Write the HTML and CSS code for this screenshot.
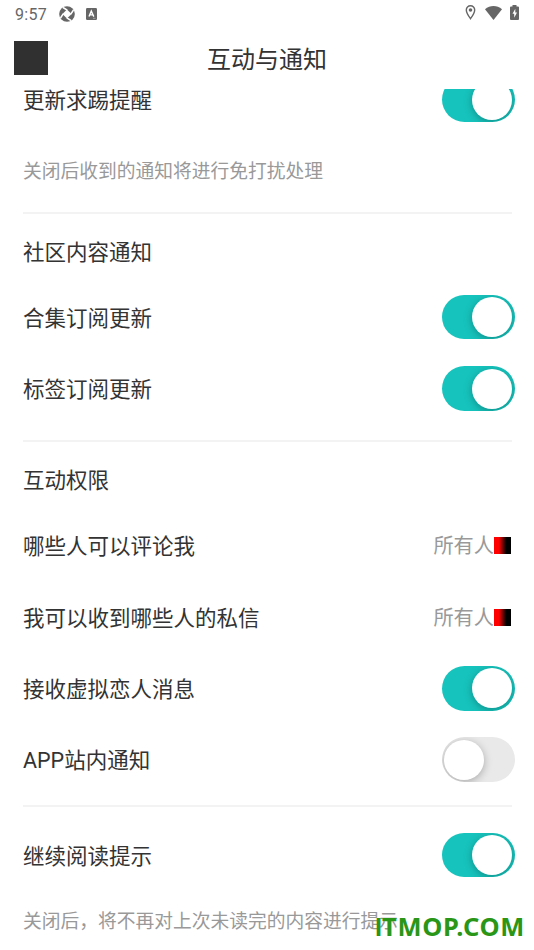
FILE: index.html
```html
<!DOCTYPE html>
<html lang="zh-CN">
<head>
<meta charset="utf-8">
<title>互动与通知</title>
<link rel="stylesheet" href="styles.css">
</head>
<body>
<div class="status">
  <span class="time">9:57</span>
  <svg class="aperture" width="16" height="16" viewBox="0 0 16 16"><circle cx="8" cy="8" r="7.8" fill="#666"/><path d="M8 3.400 12.600 8 8 12.600 3.400 8z" fill="#fff"/><path d="M8.200 4.200 4 1.500M11.800 8.200 14.500 4M7.800 11.800 12 14.500M4.200 7.800 1.500 12" stroke="#fff" stroke-width="1.500"/></svg>
  <svg class="keyboard" width="11" height="12" viewBox="0 0 11 12"><rect width="11" height="12" rx="1.2" fill="#666"/><path d="M3 8.6 5.3 3.1 7.8 8.6M3.9 6.9h3" fill="none" stroke="#fff" stroke-width="1.4"/><path d="M7 10.3h2.5" stroke="#bbb" stroke-width=".7"/></svg>
  <span class="spacer"></span>
  <svg class="pin" width="11" height="15" viewBox="0 0 10 15"><path d="M5 .8C2.600.8.8 2.600.8 5c0 3 4.200 8.700 4.200 8.700S9.200 8 9.200 5C9.200 2.600 7.400.8 5 .8z" fill="none" stroke="#666" stroke-width="1.400"/><circle cx="5" cy="5" r="1.800" fill="#666"/></svg>
  <svg class="wifi" width="17" height="14" viewBox="0 0 17 14"><path d="M0 3.300C5-1 12-1 17 3.300L8.500 14z" fill="#666"/></svg>
  <svg class="battery" width="9" height="15" viewBox="0 0 9 15"><path d="M2.500 0h4v1.500H8q1 0 1 1V14q0 1-1 1H1q-1 0-1-1V2.500q0-1 1-1h1.500z" fill="#666"/><path d="M5.300 3.700 2.500 8.700h1.700v4L7 7.500H5.300z" fill="#fff"/></svg>
</div>
<header class="header">
  <span class="back"></span>
  <h1 class="title">互动与通知</h1>
</header>
<main class="viewport">
  <div class="list">
    <div class="row"><span class="label">更新求踢提醒</span><span class="toggle on"></span></div>
    <p class="hint first">关闭后收到的通知将进行免打扰处理</p>
    <section class="group">
      <h2 class="heading">社区内容通知</h2>
      <div class="row"><span class="label">合集订阅更新</span><span class="toggle on"></span></div>
      <div class="row"><span class="label">标签订阅更新</span><span class="toggle on"></span></div>
    </section>
    <section class="group permissions">
      <h2 class="heading">互动权限</h2>
      <div class="row"><span class="label">哪些人可以评论我</span><span class="value"><span class="label">所有人</span><i class="arrow"></i></span></div>
      <div class="row"><span class="label">我可以收到哪些人的私信</span><span class="value"><span class="label">所有人</span><i class="arrow"></i></span></div>
      <div class="row"><span class="label">接收虚拟恋人消息</span><span class="toggle on"></span></div>
      <div class="row"><span class="label">APP站内通知</span><span class="toggle"></span></div>
    </section>
    <section class="group reading">
      <div class="row"><span class="label">继续阅读提示</span><span class="toggle on"></span></div>
      <p class="hint">关闭后，将不再对上次未读完的内容进行提示</p>
    </section>
  </div>
</main>
<div class="watermark"><span class="initial">I</span>TMOP.COM</div>
</body>
</html>
```

FILE: styles.css
```css
* { box-sizing: border-box; }
body {
  margin: 0;
  width: 534px;
  height: 950px;
  overflow: hidden;
  position: relative;
  background: #fff;
  color: #333;
  font-family: Roboto, "Noto Sans CJK SC", sans-serif;
}
h1, h2, p { margin: 0; font-weight: 400; }
.status {
  display: flex;
  align-items: center;
  height: 27px;
  padding: 0 16px 0 15px;
  color: #666;
}
.time { width: 44px; font-size: 16px; letter-spacing: .3px; line-height: 27px; padding-top: 1px; }
.keyboard { margin-left: 11px; }
.spacer { flex: 1; }
.wifi { margin: 0 8px 0 9px; }
.pin, .wifi, .battery { position: relative; left: 1px; top: -1px; }
.header {
  display: grid;
  grid-template-columns: 34px 1fr 34px;
  align-items: center;
  height: 62px;
  padding: 0 14px;
}
.back { width: 34px; height: 34px; background: #303030; }
.title { text-align: center; font-size: 24px; line-height: 34px; padding-top: 4px; }
.viewport { height: 861px; overflow: hidden; }
.list { margin-top: -25px; padding: 0 22.5px 0 23px; }
.row {
  display: flex;
  align-items: center;
  justify-content: space-between;
  height: 71.3px;
  font-size: 21.5px;
  white-space: nowrap;
}
.label { padding-bottom: 2px; }
.toggle {
  display: flex;
  align-items: center;
  width: 72.5px;
  height: 44.5px;
  margin-right: -3px;
  padding: 0 2.5px 0 2px;
  border-radius: 23px;
  background: #e9e9e9;
  overflow: hidden;
}
.toggle::before {
  content: "";
  width: 40px;
  height: 40px;
  border-radius: 50%;
  background: #fff;
  box-shadow: 0 2px 8px rgba(0, 0, 0, .28);
}
.toggle.on { justify-content: flex-end; background: #16c4bd; }
.value { display: flex; align-items: center; color: #999; font-size: 20.2px; margin-right: .5px; }
.arrow { width: 17px; height: 17px; background: linear-gradient(90deg, #f00 28%, #000 72%); }
.hint { height: 60px; line-height: 62px; font-size: 18.75px; color: #999; white-space: nowrap; }
.hint.first { height: 70px; line-height: 75px; margin-bottom: 6.300px; }
.group { border-top: 2px solid #f3f3f3; padding: 8px 0 16px; }
.heading { height: 60px; line-height: 62px; font-size: 21.5px; }
.permissions { padding-bottom: 10px; }
.reading { padding-top: 12px; padding-bottom: 0; }
.watermark {
  position: absolute;
  left: 375px;
  top: 909px;
  font: 700 25.5px/34px "Noto Sans", sans-serif;
  letter-spacing: .7px;
  color: #2a9617;
}
.initial { font-family: "Liberation Sans", sans-serif; letter-spacing: 0; }
```
